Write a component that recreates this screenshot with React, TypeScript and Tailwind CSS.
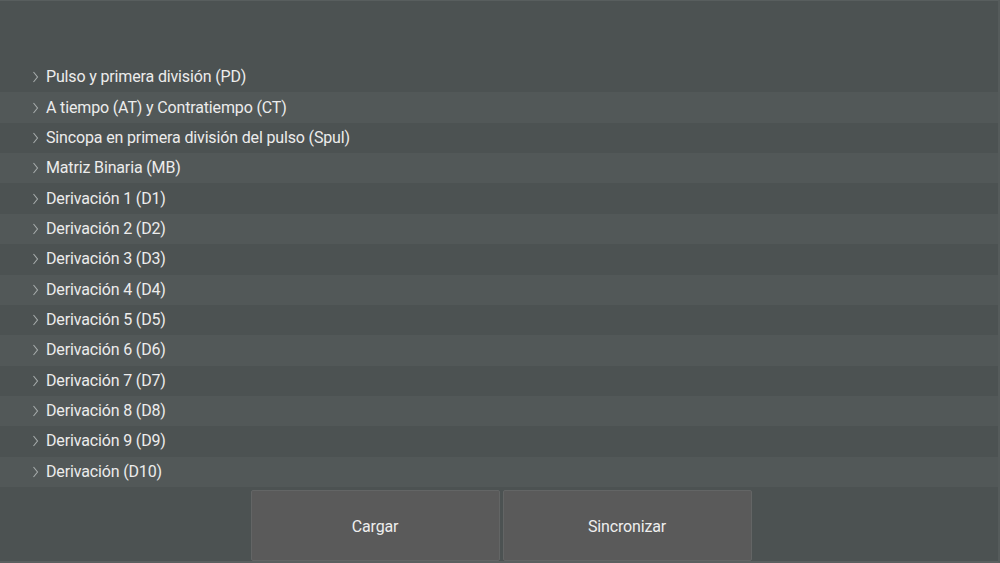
const items = [
  "Pulso y primera división (PD)",
  "A tiempo (AT) y Contratiempo (CT)",
  "Sincopa en primera división del pulso (Spul)",
  "Matriz Binaria (MB)",
  "Derivación 1 (D1)",
  "Derivación 2 (D2)",
  "Derivación 3 (D3)",
  "Derivación 4 (D4)",
  "Derivación 5 (D5)",
  "Derivación 6 (D6)",
  "Derivación 7 (D7)",
  "Derivación 8 (D8)",
  "Derivación 9 (D9)",
  "Derivación (D10)",
];

function Chevron() {
  return (
    <svg width="7" height="12" viewBox="0 0 7 12" className="shrink-0">
      <polyline
        points="1.5,1 5.5,6 1.5,11"
        fill="none"
        stroke="#a7acac"
        strokeWidth="1.1"
      />
    </svg>
  );
}

export default function App() {
  return (
    <div
      className="w-[1000px] h-[563px] bg-[#4c5252] flex flex-col overflow-hidden border-t border-t-[#585e5e] border-r-2 border-r-[#555b5b] border-b-2 border-b-[#5a5f5f]"
      style={{ fontFamily: "Roboto, 'Liberation Sans', sans-serif" }}
    >
      {/* list */}
      <div className="mt-[61px] h-[425px] flex flex-col">
        {items.map((label, i) => (
          <div
            key={label}
            className={`flex-1 flex items-center pl-[32px] gap-[7px] ${
              i % 2 === 1 ? "bg-[#525858]" : ""
            }`}
          >
            <Chevron />
            <span className="text-[16px] tracking-[-0.15px] text-[#ececec] leading-none">
              {label}
            </span>
          </div>
        ))}
      </div>

      {/* buttons */}
      <div className="mt-[3px] flex justify-center gap-[3px] pl-[4px]">
        <button className="w-[249px] h-[71px] pt-[3px] bg-[#5a5a5a] border border-[#636565] rounded-[2px] text-[16px] tracking-[-0.15px] text-[#eeeeee]">
          Cargar
        </button>
        <button className="w-[249px] h-[71px] pt-[3px] bg-[#5a5a5a] border border-[#636565] rounded-[2px] text-[16px] tracking-[-0.15px] text-[#eeeeee]">
          Sincronizar
        </button>
      </div>
    </div>
  );
}
